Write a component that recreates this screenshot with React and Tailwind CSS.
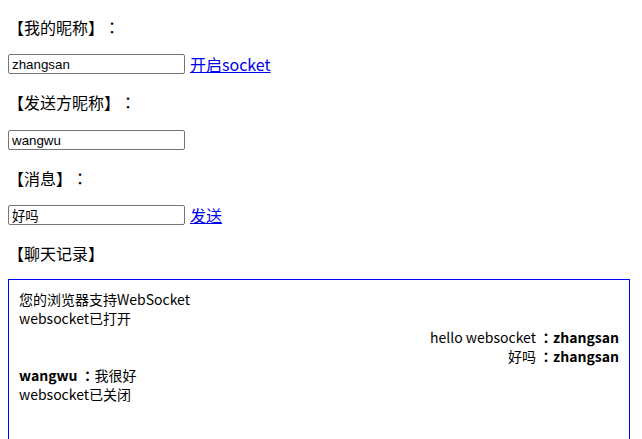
import React from 'react';

const cjk = { fontFamily: '"Microsoft YaHei", "Noto Sans CJK SC", sans-serif' };

// centered full-width colon, as in the original font
function Colon() {
  return <span className="font-['Noto_Sans_CJK_TC','Noto_Sans_CJK_SC',sans-serif]">：</span>;
}

function Field({ value, link }) {
  return (
    <div className="flex items-center h-[20px]">
      <input
        defaultValue={value}
        className="w-[177px] h-[20px] border border-[#767676] rounded-[2px] px-[3px] text-[13.33px] text-black bg-white font-['Liberation_Sans','Noto_Sans_CJK_SC',sans-serif] outline-none"
      />
      {link && (
        <a href="#" className="ml-[5px] text-[16px] leading-[20px] text-[#0000ee] underline">
          {link}
        </a>
      )}
    </div>
  );
}

export default function App() {
  return (
    <div
      className="bg-white h-[439px] px-[8px] pt-[16px] text-black overflow-hidden [text-spacing-trim:space-all]"
      style={cjk}
    >
      <p className="text-[16px] leading-[22px] h-[22px]">【我的昵称】<Colon /></p>
      <div className="mt-[16px]"><Field value="zhangsan" link="开启socket" /></div>
      <p className="mt-[17px] text-[16px] leading-[22px] h-[22px]">【发送方昵称】<Colon /></p>
      <div className="mt-[17px]"><Field value="wangwu" /></div>
      <p className="mt-[17px] text-[16px] leading-[22px] h-[22px]">【消息】<Colon /></p>
      <div className="mt-[16px]"><Field value="好吗" link="发送" /></div>
      <p className="mt-[17px] text-[16px] leading-[22px] h-[22px]">【聊天记录】</p>
      <div className="mt-[15px] w-[622px] h-[300px] border border-[#0000ff] px-[10px] pt-[10px] text-[14px] leading-[19px]">
        <div>您的浏览器支持WebSocket</div>
        <div>websocket已打开</div>
        <div className="text-right">hello websocket <b><Colon />zhangsan</b></div>
        <div className="text-right">好吗 <b><Colon />zhangsan</b></div>
        <div><b>wangwu <Colon /></b>我很好</div>
        <div>websocket已关闭</div>
      </div>
    </div>
  );
}
